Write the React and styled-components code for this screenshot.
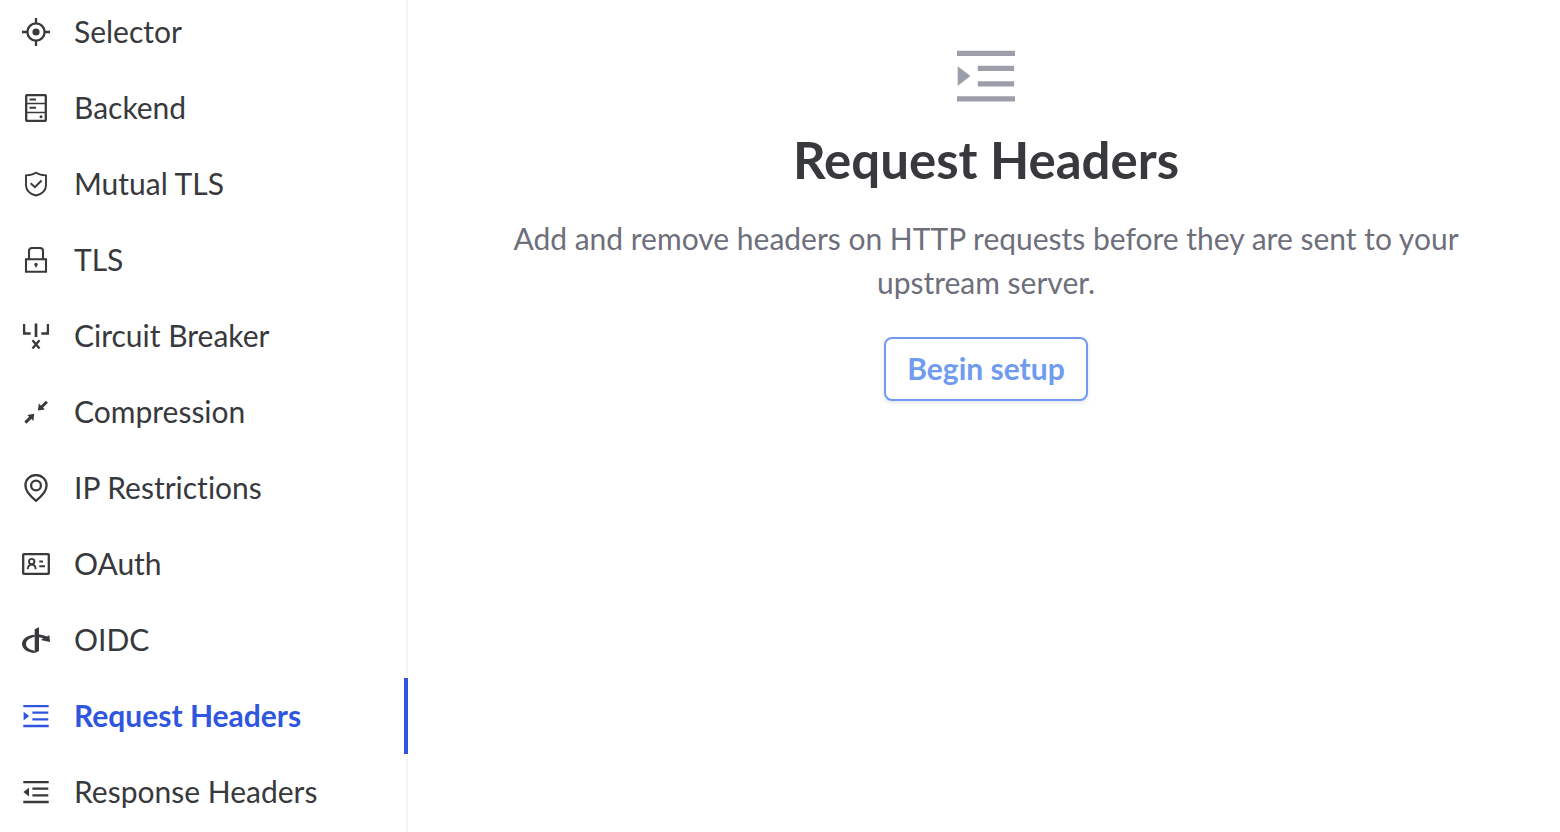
import React from 'react';
import styled, { createGlobalStyle } from 'styled-components';

const GlobalStyle = createGlobalStyle`
  * {
    box-sizing: border-box;
  }

  body {
    margin: 0;
    overflow: hidden;
    background: #fff;
    color: #38393c;
    font-family: Lato, 'Liberation Sans', sans-serif;
    font-size: 30px;
    font-variant-ligatures: none;
  }
`;

const Page = styled.div`
  display: flex;
  height: 100vh;
  overflow: hidden;
`;

const Sidebar = styled.nav`
  flex: 0 0 408px;
  box-shadow: inset -2px 0 #f4f4f5;
`;

const List = styled.ul`
  margin: -6px 0 0;
  padding: 0;
  list-style: none;
`;

const Item = styled.a`
  display: flex;
  align-items: center;
  gap: 24px;
  height: 76px;
  padding-left: 22px;
  border-right: 4px solid ${p => (p.$active ? '#3056df' : 'transparent')};
  color: ${p => (p.$active ? '#3056df' : 'inherit')};
  font-weight: ${p => (p.$active ? 700 : 400)};
  text-decoration: none;
`;

const Label = styled.span`
  padding-bottom: 2px;
`;

const Svg = styled.svg`
  flex: none;
  width: ${p => p.$size}px;
  height: ${p => p.$size}px;
  fill: none;
  stroke: currentColor;
  stroke-width: 2.3;

  .solid {
    fill: currentColor;
    stroke: none;
  }
`;

const Main = styled.main`
  flex: 1;
  display: flex;
  flex-direction: column;
  align-items: center;
  padding: 44px 96px 0 100px;
  text-align: center;
`;

const HeroIcon = styled.div`
  display: flex;
  color: #9c9ea9;
`;

const Title = styled.h1`
  margin: 20px 0 24px;
  font-size: 51px;
  font-weight: 700;
  line-height: 64px;
`;

const Description = styled.p`
  margin: 0 0 33px;
  color: #6d6f7b;
  line-height: 44px;
`;

const Button = styled.button`
  height: 64px;
  padding: 0 21px 2px;
  border: 2px solid #6f9bf0;
  border-radius: 8px;
  background: #fff;
  box-shadow: 0 2px 4px rgba(30, 50, 100, 0.12);
  color: #6f9bf0;
  font: inherit;
  font-weight: 700;
`;

const headerLines = <path d="M1.3 4.1h25.4M10.4 10.7h15.9M10.4 17.4h15.9M1.3 24h25.4" />;

const icons = {
  selector: (
    <>
      <circle cx="14" cy="14" r="8.6" />
      <circle className="solid" cx="14" cy="14" r="3.6" />
      <path d="M14 0v5M14 23v5M0 14h5M23 14h5" />
    </>
  ),
  backend: (
    <>
      <rect x="4.2" y="1.2" width="19.6" height="25.6" rx="0.6" />
      <path d="M4 9.5h20M4 18.5h20" strokeWidth="1.7" />
      <path d="M7.5 5.4H14M7.5 13.8H14" strokeWidth="2" />
      <circle className="solid" cx="19" cy="22.8" r="1.5" />
    </>
  ),
  shield: (
    <>
      <path d="M14 2.7c2.8 1.8 6.2 2.5 10 2.7v9.8c0 5-4 8.8-10 10.3C8 24 4 20.2 4 15.2V5.4c3.8-.2 7.2-.9 10-2.7z" strokeWidth="1.9" />
      <path d="m8.7 13.2 4.2 4 6.7-6.7" strokeWidth="2" />
    </>
  ),
  lock: (
    <>
      <path d="M4 13.2h20v12.6H4zM7 13V4.8Q7 2 10 2h8q3 0 3 2.8V13" strokeWidth="2.1" />
      <circle className="solid" cx="14" cy="18.5" r="1.7" />
      <path d="M14 18.5v3" strokeWidth="1.4" />
    </>
  ),
  breaker: (
    <>
      <path d="M2.1 2v9.5h6.6M25.9 2v9.5h-6.6" />
      <path d="M14 1.5V15" strokeWidth="2.7" />
      <path d="m10.500 18.300 7 8.200M17.500 18.300l-7 8.200" />
    </>
  ),
  compress: (
    <>
      <path d="m3.4 24.6 6-6M24.9 3.7l-6 6" strokeWidth="2.9" />
      <path className="solid" d="m5.3 17 6.900-1.200-.8 7.200zM22.900 11.400l-7 1.200.9-7.200z" />
    </>
  ),
  pin: (
    <>
      <path d="M14 26.800C8.500 22.500 3.400 17.600 3.400 11.300a10.600 10.300 0 0 1 21.200 0c0 6.300-5.100 11.200-10.600 15.500z" />
      <circle cx="14" cy="11.5" r="4.9" />
    </>
  ),
  idCard: (
    <>
      <rect x="1.2" y="4.2" width="25.6" height="19.6" rx="0.6" />
      <circle cx="9.7" cy="11.6" r="2.7" strokeWidth="1.9" />
      <path d="M5.7 19.2c.3-2.8 1.7-4.600 4-4.600s3.800 1.800 4 4.600M17.300 11.500H21M17.300 16.300H23" strokeWidth="1.9" />
    </>
  ),
  openid: (
    <>
      <path className="solid" d="M12.7 3.3 17 1.3v23.6l-4.3 2z" />
      <path
        className="solid"
        d="M12.7 8.700C5 9.200 0 13 0 18c0 4.800 5.200 8.600 12.700 9v-2.300c-5-.7-8.700-3.300-8.700-6.700 0-3.500 3.700-6.200 8.700-6.900zM17 8.600c3 .2 5.700.9 7.700 1.800l2.600-1.200.8 6.900-9.400-2.100 2.700-1.500c-1.200-.6-2.700-1.100-4.400-1.300z"
      />
    </>
  ),
  indent: (
    <>
      {headerLines}
      <path className="solid" d="M1.600 9.700 7.200 14l-5.600 4.400z" />
    </>
  ),
  outdent: (
    <>
      {headerLines}
      <path className="solid" d="M7 9.700 1.400 14 7 18.400z" />
    </>
  ),
};

function Icon({ name, size = 28 }) {
  return (
    <Svg viewBox="0 0 28 28" $size={size} aria-hidden="true">
      {icons[name]}
    </Svg>
  );
}

const items = [
  { label: 'Selector', icon: 'selector' },
  { label: 'Backend', icon: 'backend' },
  { label: 'Mutual TLS', icon: 'shield' },
  { label: 'TLS', icon: 'lock' },
  { label: 'Circuit Breaker', icon: 'breaker' },
  { label: 'Compression', icon: 'compress' },
  { label: 'IP Restrictions', icon: 'pin' },
  { label: 'OAuth', icon: 'idCard' },
  { label: 'OIDC', icon: 'openid' },
  { label: 'Request Headers', icon: 'indent', active: true },
  { label: 'Response Headers', icon: 'outdent' },
];

export default function App() {
  return (
    <>
      <GlobalStyle />
      <Page>
        <Sidebar>
          <List>
            {items.map(({ label, icon, active }) => (
              <li key={label}>
                <Item href="#" $active={active} aria-current={active ? 'page' : undefined}>
                  <Icon name={icon} />
                  <Label>{label}</Label>
                </Item>
              </li>
            ))}
          </List>
        </Sidebar>
        <Main>
          <HeroIcon>
            <Icon name="indent" size={64} />
          </HeroIcon>
          <Title>Request Headers</Title>
          <Description>
            Add and remove headers on HTTP requests before they are sent to your upstream server.
          </Description>
          <Button type="button">Begin setup</Button>
        </Main>
      </Page>
    </>
  );
}
